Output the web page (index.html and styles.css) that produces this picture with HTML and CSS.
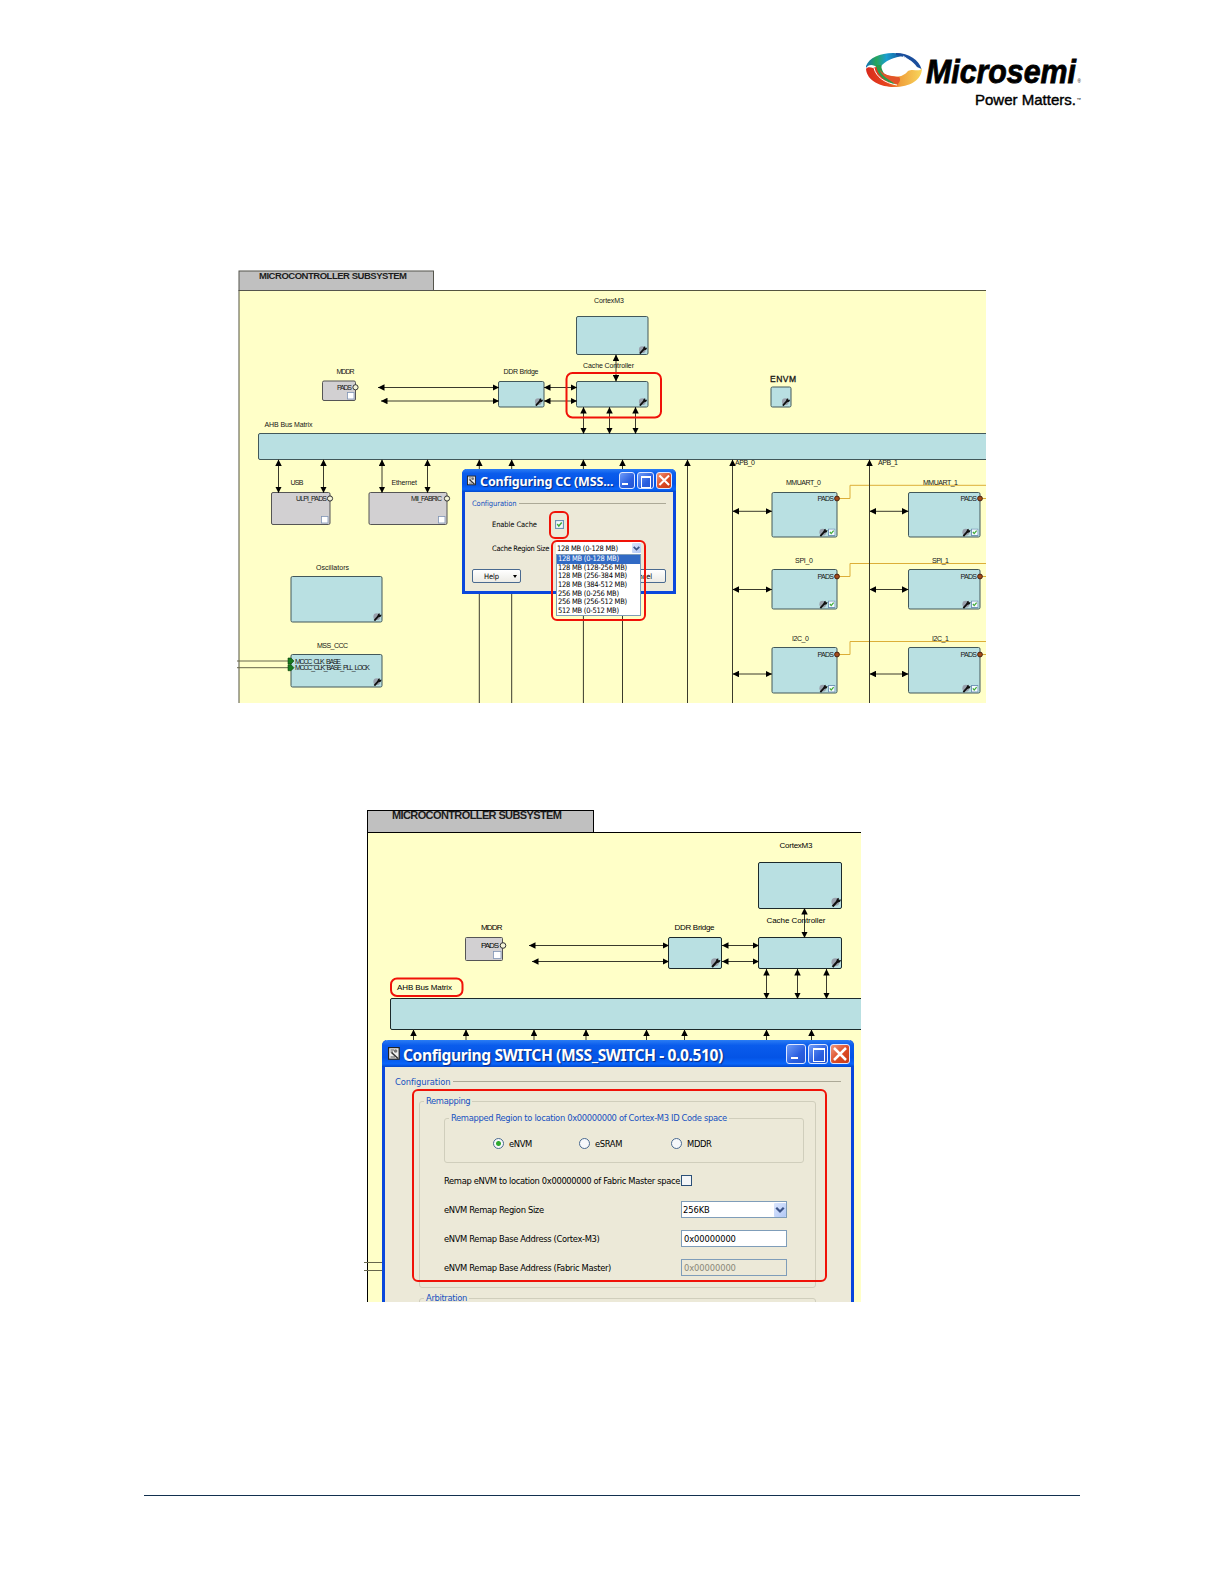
FILE: index.html
```html
<!doctype html>
<html lang="en">

<head>
    <meta charset="utf-8" />
    <title>Microsemi - Configuring CC and SWITCH</title>
    <link rel="stylesheet" href="styles.css">
</head>

<body>
    <!-- shared symbols -->
    <svg class="defs" width="0" height="0">
        <defs>
            <marker id="arrow" viewBox="0 0 7 7" refX="7" refY="3.5" markerWidth="6.5" markerHeight="6.5"
                markerUnits="userSpaceOnUse" orient="auto-start-reverse">
                <path d="M0 0 L7 3.5 L0 7 z" />
            </marker>
            <symbol id="wrench" viewBox="0 0 10 10">
                <circle cx="4.2" cy="4.6" r="3.8" fill="#9aa2ae" />
                <path d="M1.5 9 L6.2 3.8" stroke="#111" stroke-width="2" />
                <path d="M5 4.4 L5.6 1.6 L7.4 0.8 L7.4 2.6 L9.6 2.4 L8.6 4.6 L6.4 5.2 z" fill="#111" stroke="none" />
            </symbol>
            <symbol id="tick" viewBox="0 0 8 8">
                <rect x="0.5" y="0.5" width="7" height="7" fill="#f4faff" stroke="#6f93b5" />
                <path d="M2 3.6 L3.4 5.4 L6 2.2" fill="none" stroke="#3faa35" stroke-width="1.3" />
            </symbol>
            <symbol id="appicon" viewBox="0 0 12 13">
                <rect x="0.6" y="0.6" width="10.6" height="11.6" fill="#eee" stroke="#222" stroke-width="1.2" />
                <path d="M2.5 3 H6 M2.5 5 H5 M2.5 10 H7" stroke="#555" />
                <circle cx="7.6" cy="4" r="1.8" fill="#777" />
                <path d="M3.5 5.5 L10 11.5" stroke="#333" stroke-width="1.6" />
            </symbol>
        </defs>
    </svg>

    <div class="page">
        <header class="header">
            <svg width="216" height="64" viewBox="866 48 216 64">
                <defs>
                    <linearGradient id="cool" x1="0" x2="1">
                        <stop offset="0" stop-color="#1273b9" />
                        <stop offset="0.25" stop-color="#27a65a" />
                        <stop offset="0.5" stop-color="#1a9ed0" />
                        <stop offset="1" stop-color="#123c86" />
                    </linearGradient>
                    <linearGradient id="warm" x1="0" x2="1">
                        <stop offset="0" stop-color="#d9291c" />
                        <stop offset="0.4" stop-color="#e8481f" />
                        <stop offset="0.62" stop-color="#f0a23c" />
                        <stop offset="1" stop-color="#f8d65c" />
                    </linearGradient>
                </defs>
                <path d="M866 66 C869 58 880 53 893 53 C898 53 903 54 907 56 C898 56 888 59 882 65 L880 70 L875 66 C871 64 868 65 866 68 z" fill="url(#cool)" />
                <path d="M896 53 C909 53 919 60 921.5 69 L917 67 C913 61 905 56 896 55 z" fill="#1a4e9c" />
                <path d="M903 56 C908 59 911 62 913 66" stroke="#fff" stroke-width="0.9" fill="none" />
                <path d="M866 69 C867 81 881 87 894 87 C910 87 922 80 922 68 C919 73 914 68 908 71 C903 77 898 77 892 76 C884 75 880 71 879 66 L873 68 C870 67 867 67 866 69 z" fill="url(#warm)" />
                <path d="M876 65 C877 75 885 82 896 85 C887 77 882 74 881 65 z" fill="#2a9c4a" />
                <path d="M880 71 C884 78 890 80 897 85 C900 82 901 79 899 77 C890 77 884 75 880 70 z" fill="#e2542a" />
                <path d="M874 68 C876 77 885 83 897 85" stroke="#fff" stroke-width="1" fill="none" />
                <text class="brand" x="926" y="83" textLength="150" lengthAdjust="spacingAndGlyphs">Microsemi</text>
                <text class="dot" x="1077.5" y="83">®</text>
                <text class="slogan" x="975" y="105" textLength="101" lengthAdjust="spacingAndGlyphs">Power Matters.</text>
                <text class="dot" x="1076.5" y="101" textLength="4.5">™</text>
            </svg>
        </header>

        <!-- figure 1: cache controller -->
        <div class="figure fig1">
            <svg class="diagram" width="750" height="433" viewBox="237 270 750 433">
                <rect class="sheet" x="239" y="290.5" width="760" height="430" />
                <rect class="tab" x="239" y="271" width="194.5" height="19.5" />
                <text class="title" x="259" y="279" textLength="148">MICROCONTROLLER SUBSYSTEM</text>

                <g class="node">
                    <rect x="576.5" y="316.5" width="71.5" height="38" rx="1.5" />
                    <rect x="498.5" y="381.5" width="45.5" height="25.5" rx="1.5" />
                    <rect x="576.5" y="381.5" width="71.5" height="25.5" rx="1.5" />
                    <rect x="771" y="387" width="20" height="20" rx="1.5" />
                    <rect x="258.5" y="433.5" width="760" height="26" rx="1.5" />
                    <rect x="291" y="576.5" width="91" height="45.5" rx="1.5" />
                    <rect x="291" y="654.5" width="91" height="32.5" rx="1.5" />
                    <rect x="772" y="492.5" width="65" height="44.5" rx="1.5" />
                    <rect x="908.5" y="492.5" width="71.5" height="44.5" rx="1.5" />
                    <rect x="772" y="569.5" width="65" height="39.5" rx="1.5" />
                    <rect x="908.5" y="569.5" width="71.5" height="39.5" rx="1.5" />
                    <rect x="772" y="647.5" width="65" height="45.5" rx="1.5" />
                    <rect x="908.5" y="647.5" width="71.5" height="45.5" rx="1.5" />
                </g>
                <g class="node off">
                    <rect x="322.5" y="381" width="33" height="19.5" rx="1.5" />
                    <rect x="271.5" y="492.5" width="58.5" height="32" rx="1.5" />
                    <rect x="369" y="492.5" width="78" height="32" rx="1.5" />
                </g>
                <g class="box">
                    <rect x="347.5" y="392.5" width="6.5" height="6.5" />
                    <rect x="321.5" y="516.5" width="6.5" height="6.5" />
                    <rect x="438.5" y="516.5" width="6.5" height="6.5" />
                </g>
                <g class="port">
                    <circle cx="355.5" cy="387.3" r="2.6" />
                    <circle cx="330" cy="498.5" r="2.6" />
                    <circle cx="447" cy="498.5" r="2.6" />
                </g>

                <!-- pads wires -->
                <g class="pad">
                    <path d="M837 498.5 H850 V485.3 H987 M980 498.5 H987" />
                    <path d="M837 576.5 H850 V563.5 H987 M980 576.5 H987" />
                    <path d="M837 654.5 H850 V641.5 H987 M980 654.5 H987" />
                </g>
                <g class="pin">
                    <circle cx="837" cy="498.5" r="2.4" />
                    <circle cx="980" cy="498.5" r="2.4" />
                    <circle cx="837" cy="576.5" r="2.4" />
                    <circle cx="980" cy="576.5" r="2.4" />
                    <circle cx="837" cy="654.5" r="2.4" />
                    <circle cx="980" cy="654.5" r="2.4" />
                </g>

                <g class="both">
                    <path d="M378 387.5 H499" />
                    <path d="M381 401 H499" />
                    <path d="M544 387.5 H577" />
                    <path d="M544 401 H577" />
                    <path d="M616 354.5 V381.5" />
                    <path d="M583.5 407 V434" />
                    <path d="M609.5 407 V434" />
                    <path d="M635.5 407 V434" />
                    <path d="M278.5 459.5 V493" />
                    <path d="M323.5 459.5 V493" />
                    <path d="M382 459.5 V493" />
                    <path d="M427.5 459.5 V493" />
                    <path d="M732.5 511.3 H772" />
                    <path d="M869.5 511.3 H908.5" />
                    <path d="M732.5 589.5 H772" />
                    <path d="M869.5 589.5 H908.5" />
                    <path d="M732.5 674 H772" />
                    <path d="M869.5 674 H908.5" />
                </g>
                <g class="up">
                    <path d="M479.3 459.5 V703" />
                    <path d="M511.7 459.5 V703" />
                    <path d="M583.4 459.5 V703" />
                    <path d="M622.5 459.5 V703" />
                    <path d="M687.5 459.5 V703" />
                    <path d="M732.5 459.5 V703" />
                    <path d="M869.5 459.5 V703" />
                </g>
                <path class="wire" d="M237 661 H290 M237 667.7 H290" />
                <path d="M288 658 H291 L294 661 L291 664 H288 z M288 664.7 H291 L294 667.7 L291 670.7 H288 z" fill="#157a1c" stroke="#0b3f0e" stroke-width="0.6" />

                <g class="label">
                    <text x="594" y="303" textLength="30">CortexM3</text>
                    <text x="583" y="367.5" textLength="51">Cache Controller</text>
                    <text x="503.5" y="374" textLength="35">DDR Bridge</text>
                    <text x="336.5" y="374" textLength="18">MDDR</text>
                    <text x="337" y="389.8" textLength="15">PADS</text>
                    <text x="264.5" y="426.7" textLength="48">AHB Bus Matrix</text>
                    <text class="strong" x="770" y="382" textLength="26">ENVM</text>
                    <text x="735" y="465" textLength="20">APB_0</text>
                    <text x="878" y="465" textLength="20">APB_1</text>
                    <text x="290.5" y="485.3" textLength="13">USB</text>
                    <text x="391.5" y="485.3" textLength="25.5">Ethernet</text>
                    <text x="296" y="500.7" textLength="31">ULPI_PADS</text>
                    <text x="411" y="500.7" textLength="31">MII_FABRIC</text>
                    <text x="316" y="569.8" textLength="33">Oscillators</text>
                    <text x="317" y="647.5" textLength="31">MSS_CCC</text>
                    <text x="295" y="663.5" textLength="46">MCCC_CLK_BASE</text>
                    <text x="295" y="670.3" textLength="75">MCCC_CLK_BASE_PLL_LOCK</text>
                    <text x="786" y="485.3" textLength="35">MMUART_0</text>
                    <text x="923" y="485.3" textLength="35">MMUART_1</text>
                    <text x="795" y="563" textLength="18">SPI_0</text>
                    <text x="932" y="563" textLength="17">SPI_1</text>
                    <text x="792" y="641.3" textLength="17">I2C_0</text>
                    <text x="932" y="641.3" textLength="17">I2C_1</text>
                    <text x="817.5" y="501" textLength="16.5">PADS</text>
                    <text x="960.5" y="501" textLength="16.5">PADS</text>
                    <text x="817.5" y="579" textLength="16.5">PADS</text>
                    <text x="960.5" y="579" textLength="16.5">PADS</text>
                    <text x="817.5" y="657" textLength="16.5">PADS</text>
                    <text x="960.5" y="657" textLength="16.5">PADS</text>
                </g>

                <use href="#wrench" x="638.5" y="345.5" width="9" height="9" />
                <use href="#wrench" x="534.5" y="397.5" width="9" height="9" />
                <use href="#wrench" x="638.5" y="397.5" width="9" height="9" />
                <use href="#wrench" x="781.5" y="397.5" width="9" height="9" />
                <use href="#wrench" x="373" y="612.5" width="9" height="9" />
                <use href="#wrench" x="373" y="677.5" width="9" height="9" />
                <use href="#wrench" x="819" y="528" width="9" height="9" />
                <use href="#wrench" x="962" y="528" width="9" height="9" />
                <use href="#wrench" x="819" y="600" width="9" height="9" />
                <use href="#wrench" x="962" y="600" width="9" height="9" />
                <use href="#wrench" x="819" y="684" width="9" height="9" />
                <use href="#wrench" x="962" y="684" width="9" height="9" />
                <use href="#tick" x="828" y="528.5" width="7.5" height="7.5" />
                <use href="#tick" x="971" y="528.5" width="7.5" height="7.5" />
                <use href="#tick" x="828" y="600.5" width="7.5" height="7.5" />
                <use href="#tick" x="971" y="600.5" width="7.5" height="7.5" />
                <use href="#tick" x="828" y="685" width="7.5" height="7.5" />
                <use href="#tick" x="971" y="685" width="7.5" height="7.5" />

                <rect class="mark" x="566.5" y="373" width="94.5" height="44.5" rx="6" />
            </svg>

            <div class="window cc">
                <div class="titlebar">
                    <svg class="app" width="9" height="11"><use href="#appicon" width="9" height="11" /></svg>
                    <span class="caption">Configuring CC (MSS...</span>
                    <span class="btn min"></span>
                    <span class="btn max"></span>
                    <span class="btn close"><svg viewBox="0 0 12 12"><path d="M2 2 L10 10 M10 2 L2 10" /></svg></span>
                </div>
                <div class="content">
                    <div class="heading"><span>Configuration</span></div>
                    <div class="row first"><label>Enable Cache</label><svg width="9" height="9"><use href="#tick" width="9" height="9" /></svg></div>
                    <div class="row second"><label>Cache Region Size</label></div>
                    <div class="buttons">
                        <span class="push help">Help<i></i></span>
                        <span class="push cancel">Cancel</span>
                    </div>
                </div>
                <div class="dropdown">
                    <div class="select"><span>128 MB (0-128 MB)</span><b><svg viewBox="0 0 8 8"><path d="M1.5 2.5 L4 5 L6.5 2.5" /></svg></b></div>
                    <ul>
                        <li class="current">128 MB (0-128 MB)</li>
                        <li>128 MB (128-256 MB)</li>
                        <li>128 MB (256-384 MB)</li>
                        <li>128 MB (384-512 MB)</li>
                        <li>256 MB (0-256 MB)</li>
                        <li>256 MB (256-512 MB)</li>
                        <li>512 MB (0-512 MB)</li>
                    </ul>
                </div>
                <div class="callout c1"></div>
                <div class="callout c2"></div>
            </div>
        </div>

        <!-- figure 2: switch -->
        <div class="figure fig2">
            <svg class="diagram" width="497" height="492" viewBox="364 810 497 492">
                <rect class="sheet" x="367.5" y="832.5" width="510" height="490" />
                <rect class="tab" x="367.5" y="810.5" width="226" height="22" />
                <text class="title" x="392" y="819" textLength="170">MICROCONTROLLER SUBSYSTEM</text>
                <g class="node">
                    <rect x="758.5" y="862.5" width="83" height="46" rx="1.5" />
                    <rect x="668.5" y="937.5" width="53" height="31" rx="1.5" />
                    <rect x="758.5" y="937.5" width="83" height="31" rx="1.5" />
                    <rect x="390.5" y="998.5" width="500" height="31" rx="1.5" />
                </g>
                <g class="node off">
                    <rect x="465.5" y="937.5" width="37" height="23" rx="1" />
                </g>
                <g class="box">
                    <rect x="493.5" y="951.5" width="7.5" height="7" />
                </g>
                <g class="port">
                    <circle cx="503" cy="945.5" r="2.8" />
                </g>
                <g class="both">
                    <path d="M529 945.5 H669" />
                    <path d="M532 961.5 H669" />
                    <path d="M722 945.5 H759" />
                    <path d="M722 961.5 H759" />
                    <path d="M804.5 908 V938" />
                    <path d="M766.5 969 V999" />
                    <path d="M797.5 969 V999" />
                    <path d="M826.5 969 V999" />
                </g>
                <g class="up">
                    <path d="M413.5 1029.5 V1045" />
                    <path d="M466 1029.5 V1045" />
                    <path d="M534 1029.5 V1045" />
                    <path d="M586 1029.5 V1045" />
                    <path d="M646.5 1029.5 V1045" />
                    <path d="M684.5 1029.5 V1045" />
                    <path d="M766.5 1029.5 V1045" />
                    <path d="M811.5 1029.5 V1045" />
                </g>
                <path class="wire" d="M364 1262.5 H384 M364 1270.5 H384" />
                <g class="label">
                    <text x="779.5" y="847.5" textLength="33">CortexM3</text>
                    <text x="766.5" y="923" textLength="59">Cache Controller</text>
                    <text x="674.5" y="930.3" textLength="40">DDR Bridge</text>
                    <text x="481" y="930.3" textLength="21.5">MDDR</text>
                    <text x="481" y="948.3" textLength="18">PADS</text>
                    <text x="397" y="990.3" textLength="55">AHB Bus Matrix</text>
                </g>
                <use href="#wrench" x="831" y="897" width="10.5" height="10.5" />
                <use href="#wrench" x="710.5" y="957.5" width="10.5" height="10.5" />
                <use href="#wrench" x="831" y="957.5" width="10.5" height="10.5" />
                <rect class="mark" x="391" y="978.5" width="71.5" height="17.5" rx="6" />
            </svg>

            <div class="window sw">
                <div class="titlebar">
                    <svg class="app" width="12" height="13"><use href="#appicon" width="12" height="13" /></svg>
                    <span class="caption">Configuring SWITCH (MSS_SWITCH - 0.0.510)</span>
                    <span class="btn min"></span>
                    <span class="btn max"></span>
                    <span class="btn close"><svg viewBox="0 0 12 12"><path d="M2 2 L10 10 M10 2 L2 10" /></svg></span>
                </div>
                <div class="content">
                    <div class="heading"><span>Configuration</span></div>
                    <fieldset class="group">
                        <legend>Remapping</legend>
                        <fieldset class="group inner">
                            <legend>Remapped Region to location 0x00000000 of Cortex-M3 ID Code space</legend>
                            <div class="radios">
                                <span class="radio on"></span><span class="r1">eNVM</span>
                                <span class="radio"></span><span class="r2">eSRAM</span>
                                <span class="radio"></span><span>MDDR</span>
                            </div>
                        </fieldset>
                        <div class="form">
                            <label>Remap eNVM to location 0x00000000 of Fabric Master space</label><span class="check"></span>
                            <label>eNVM Remap Region Size</label><span class="field pick">256KB<b><svg viewBox="0 0 8 8"><path d="M1.5 2.5 L4 5 L6.5 2.5" /></svg></b></span>
                            <label>eNVM Remap Base Address (Cortex-M3)</label><span class="field">0x00000000</span>
                            <label>eNVM Remap Base Address (Fabric Master)</label><span class="field disabled">0x00000000</span>
                        </div>
                    </fieldset>
                    <fieldset class="group arb">
                        <legend>Arbitration</legend>
                    </fieldset>
                </div>
                <div class="callout c3"></div>
            </div>
        </div>

        <div class="footer"></div>
    </div>
</body>

</html>
```

FILE: styles.css
```css
* {
    margin: 0;
    padding: 0;
    box-sizing: border-box;
}

body {
    background: #fff;
    font-family: "DejaVu Sans Condensed", "DejaVu Sans", sans-serif;
}

ul,
li {
    list-style: none;
}

svg {
    display: block;
}

.defs {
    position: absolute;
}

.page {
    height: 1584px;
    padding: 48px 144px 0;
}

.header {
    display: flex;
    justify-content: flex-end;
    height: 222px;
    margin-right: -2px;
}

.header svg {
    overflow: visible;
}

.brand {
    font: italic bold 32.5px "Liberation Sans", sans-serif;
    stroke: #000;
    stroke-width: 0.8px;
}

.slogan {
    font: 14.5px "Liberation Sans", sans-serif;
    stroke: #000;
    stroke-width: 0.4px;
}

.dot {
    font: 4.5px "Liberation Sans", sans-serif;
}

.figure {
    position: relative;
    overflow: hidden;
}

.fig1 {
    width: 749px;
    height: 433px;
    margin-left: 93px;
}

.fig2 {
    width: 497px;
    height: 492px;
    margin: 107px 0 0 220px;
}

/* diagram */
.sheet {
    fill: #ffffc8;
    stroke: #55553f;
}

.tab {
    fill: #c0c0c0;
    stroke: #55554c;
}

.fig2 .sheet,
.fig2 .tab {
    stroke: #000;
}

.title {
    font: bold 9.5px "Liberation Sans", sans-serif;
    fill: #1c1c1c;
}

.fig2 .title {
    font-size: 11px;
}

.node {
    fill: #b9e0e2;
    stroke: #42585a;
}

.fig2 .node {
    stroke: #1c2a2b;
}

.node.off {
    fill: #d2d0d2;
    stroke: #555;
}

.box {
    fill: #fff;
    stroke: #8095b5;
    stroke-width: 0.8px;
}

.port {
    fill: #f4f4d8;
    stroke: #333;
}

.pad {
    fill: none;
    stroke: #dcae38;
}

.pin {
    fill: #a34a1c;
    stroke: #4a2410;
}

.both path,
.up path,
.wire {
    fill: none;
    stroke: #3a3a2c;
    marker-start: url(#arrow);
}

.both path {
    marker-end: url(#arrow);
}

.wire {
    marker-start: none;
    stroke: #66664c;
}

.label {
    font: 7px "Liberation Sans", sans-serif;
    fill: #151515;
}

.fig2 .label {
    font-size: 8px;
    fill: #000;
}

.label .strong {
    font-size: 8.5px;
    stroke: #151515;
    stroke-width: 0.3px;
}

.mark {
    fill: none;
    stroke: #f01208;
    stroke-width: 2px;
}

/* XP windows */
.window {
    position: absolute;
    background: #ece9d8;
    border: solid #0a48dc;
    border-radius: 5px 5px 0 0;
    white-space: nowrap;
}

.titlebar {
    display: flex;
    align-items: center;
    background: linear-gradient(#2a7cf4, #0a5cec 20%, #0454e6 65%, #0a66fa 88%, #0348cc);
    color: #fff;
    font-family: "Noto Sans", sans-serif;
    font-weight: bold;
    text-shadow: 1px 1px 1px #0a2a80;
}

.caption {
    flex: 1;
}

.btn {
    position: relative;
    border: 1px solid #dfe8ff;
    border-radius: 3px;
    background: linear-gradient(135deg, #6f9cf8, #2a5fe0 60%, #2454d0);
}

.btn.close {
    background: linear-gradient(135deg, #f09a80, #dc4a24 55%, #c83c18);
}

.btn.min::after {
    content: "";
    position: absolute;
    left: 20%;
    bottom: 18%;
    width: 42%;
    height: 2px;
    background: #fff;
}

.btn.max::after {
    content: "";
    position: absolute;
    left: 22%;
    top: 22%;
    width: 56%;
    height: 56%;
    border: 1px solid #fff;
    border-top-width: 2px;
}

.btn.close path {
    stroke: #fff;
    stroke-width: 1.7px;
}

.heading {
    display: flex;
    align-items: center;
    gap: 3px;
    color: #1550c0;
}

.heading::after {
    content: "";
    flex: 1;
    height: 1px;
    background: #aca997;
}

.select b,
.pick b {
    background: linear-gradient(135deg, #dbe6fd, #b2c8f6);
    border-radius: 1px;
}

.select path,
.pick path {
    fill: none;
    stroke: #3c5488;
    stroke-width: 1.5px;
}

.callout {
    position: absolute;
    border: 2px solid #f01208;
    border-radius: 6px;
}

/* cache controller window */
.cc {
    left: 225px;
    top: 199px;
    width: 214px;
    height: 125px;
    border-width: 0 3px 3px;
    font-size: 7.5px;
    letter-spacing: -0.1px;
}

.cc .titlebar {
    height: 23px;
    margin: 0 -3px;
    padding: 0 4px 0 5px;
    gap: 2px;
    border-radius: 5px 5px 0 0;
    font-size: 12.5px;
}

.cc .caption {
    margin: 2px 0 0 2px;
    letter-spacing: -0.15px;
}

.cc .btn {
    width: 16.5px;
    height: 17px;
}

.cc .content {
    padding: 6px 7px 0;
}

.cc .heading {
    height: 11px;
}

.cc .row {
    display: flex;
    align-items: center;
    height: 24px;
    padding-left: 20px;
}

.cc .first {
    margin-top: 3px;
}

.cc .row label {
    width: 63px;
}

.cc .second {
    letter-spacing: -0.3px;
}

.cc .buttons {
    display: flex;
    justify-content: space-between;
    margin-top: 9px;
}

.push {
    display: flex;
    align-items: center;
    justify-content: center;
    width: 49px;
    height: 14px;
    border: 1px solid #4a6a90;
    border-radius: 2px;
    background: linear-gradient(#fff, #ecebe5);
}

.push.cancel {
    justify-content: flex-end;
    padding-right: 13px;
}

.push i {
    margin: 1px -8px 0 14px;
    border: 2.5px solid transparent;
    border-top: 3px solid #000;
    border-bottom: 0;
}

.dropdown {
    position: absolute;
    left: 91px;
    top: 73px;
    width: 85px;
    background: #fff;
    letter-spacing: -0.25px;
}

.select {
    display: flex;
    justify-content: space-between;
    align-items: center;
    height: 12px;
    padding-left: 1px;
}

.select b {
    width: 9px;
    height: 10px;
    padding-top: 1px;
}

.dropdown ul {
    border: 1px solid #7f9db9;
}

.dropdown li {
    height: 8.65px;
    padding-left: 1px;
    line-height: 8.65px;
}

.dropdown .current {
    background: #316ac5;
    color: #fff;
}

.c1 {
    left: 84px;
    top: 42px;
    width: 20px;
    height: 28px;
}

.c2 {
    left: 86px;
    top: 71px;
    width: 95px;
    height: 81px;
}

/* switch window */
.sw {
    left: 18px;
    top: 230px;
    width: 472px;
    height: 280px;
    border-width: 0 3px;
    font-size: 9.3px;
    letter-spacing: -0.34px;
}

.sw .titlebar {
    height: 27px;
    margin: 0 -3px;
    padding: 0 4px 0 6px;
    gap: 2px;
    border-radius: 6px 6px 0 0;
    font-size: 15.6px;
}

.sw .caption {
    margin: 2px 0 0 1px;
    letter-spacing: -0.4px;
}

.sw .btn {
    width: 20px;
    height: 20px;
}

.sw .content {
    padding: 8px 10px 0;
}

.sw .heading {
    height: 13px;
    letter-spacing: -0.1px;
}

.group {
    height: 193px;
    margin: 7px 25px 0 24px;
    padding: 0 11px 0 25px;
    border: 1px solid #d0cebc;
    border-radius: 3px;
}

.group legend {
    margin-left: -21px;
    padding: 0 2px;
    height: 12px;
    line-height: 12px;
    color: #1550c0;
}

.group.inner {
    height: 51px;
    margin: 5px 0 0 -1px;
    padding: 0 0 0 48px;
}

.group.inner legend {
    margin-left: -44px;
}

.radios {
    display: flex;
    align-items: center;
    gap: 5px;
    padding-top: 14px;
}

.radio {
    width: 11px;
    height: 11px;
    border: 1px solid #4a6a90;
    border-radius: 50%;
    background: #f6f8fa;
}

.radio.on {
    background: radial-gradient(#2fa82f 0 2px, #f6f8fa 3px);
}

.r1 {
    width: 65px;
}

.r2 {
    width: 71px;
}

.form {
    display: grid;
    grid-template-columns: 237px 106px;
    grid-auto-rows: 29px;
    align-items: center;
    margin: 3px 0 0 -1px;
}

.check {
    width: 11px;
    height: 11px;
    border: 1px solid #2c5078;
    background: #f4f6f8;
}

.field {
    display: flex;
    align-items: center;
    height: 17px;
    padding-left: 2px;
    border: 1px solid #7f9db9;
    background: #fff;
    letter-spacing: -0.1px;
}

.field.disabled {
    background: #ece9d8;
    color: #8a8878;
}

.pick {
    justify-content: space-between;
    padding-left: 1px;
}

.pick b {
    width: 12px;
    height: 14px;
    padding-top: 1px;
}

.c3 {
    left: 27px;
    top: 49px;
    width: 415px;
    height: 193px;
}

.group.arb {
    height: 60px;
    margin-top: 4px;
}

.footer {
    height: 1px;
    margin-top: 193px;
    background: #12304f;
}
```
